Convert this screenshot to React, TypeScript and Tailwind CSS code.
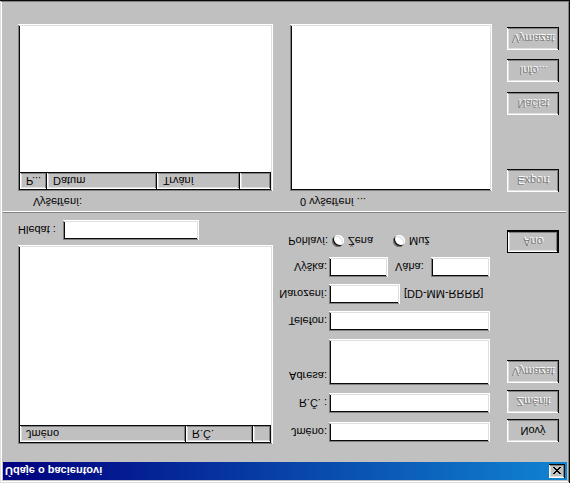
import React from "react";

const raised =
  "shadow-[inset_-1px_-1px_#0a0a0a,inset_1px_1px_#ffffff,inset_-2px_-2px_#808080,inset_2px_2px_#dfdfdf]";
const sunken =
  "shadow-[inset_-1px_-1px_#ffffff,inset_1px_1px_#808080,inset_-2px_-2px_#dfdfdf,inset_2px_2px_#0a0a0a]";

function Btn({ label, disabled, def, className = "" }: { label: string; disabled?: boolean; def?: boolean; className?: string }) {
  return (
    <div className={`w-[52px] h-[23px] shrink-0 bg-[#c0c0c0] ${def ? "border border-black" : ""} ${className}`}>
      <div
        className={`w-full h-full flex items-center justify-center ${raised} ${
          disabled ? "text-[#808080] [text-shadow:1px_1px_0_#ffffff]" : "text-black"
        }`}
      >
        {label}
      </div>
    </div>
  );
}

function Field({ className = "" }: { className?: string }) {
  return <div className={`bg-white shrink-0 ${sunken} ${className}`} />;
}

function HeadCell({ label, className = "" }: { label?: string; className?: string }) {
  return (
    <div className={`h-full shrink-0 flex items-center pl-[6px] bg-[#c0c0c0] ${raised} ${className}`}>{label}</div>
  );
}

function Radio({ label, className = "" }: { label: string; className?: string }) {
  return (
    <div className={`flex items-center ${className}`}>
      <div className="w-[12px] h-[12px] rounded-full bg-white shadow-[inset_1px_1px_#808080,inset_-1px_-1px_#ffffff,inset_2px_2px_#0a0a0a,inset_-2px_-2px_#dfdfdf]" />
      <span className="ml-[4px]">{label}</span>
    </div>
  );
}

function Row({ label, top, children, alignTop }: { label: string; top: string; children: React.ReactNode; alignTop?: boolean }) {
  return (
    <div className={`flex ${alignTop ? "items-start" : "items-center"} ${top}`}>
      <div className={`w-[49px] text-right whitespace-nowrap ${alignTop ? "pt-[3px]" : ""}`}>{label}</div>
      <div className="ml-[2px] flex items-center">{children}</div>
    </div>
  );
}

export default function App() {
  return (
    <div className="w-[570px] h-[483px] [transform:scaleY(-1)] font-['Liberation_Sans',Arial,sans-serif] text-[11px] leading-[13px] text-black">
      <div className="w-full h-full bg-[#c0c0c0] p-[3px] flex flex-col shadow-[inset_-1px_-1px_#0a0a0a,inset_1px_1px_#dfdfdf,inset_-2px_-2px_#808080,inset_2px_2px_#ffffff]">
        {/* title bar */}
        <div className="h-[18px] shrink-0 flex items-center justify-between pl-[2px] pr-[2px] bg-[linear-gradient(90deg,#000080,#1084d0)]">
          <span className="text-white font-bold">Údaje o pacientovi</span>
          <div className={`w-[16px] h-[14px] bg-[#c0c0c0] flex items-center justify-center ${raised}`}>
            <svg width="8" height="7" viewBox="0 0 8 7" shapeRendering="crispEdges">
              <path
                d="M0 0h2v1h-2zM6 0h2v1h-2zM1 1h2v1h-2zM5 1h2v1h-2zM2 2h4v1h-4zM3 3h2v1h-2zM2 4h4v1h-4zM1 5h2v1h-2zM5 5h2v1h-2zM0 6h2v1h-2zM6 6h2v1h-2z"
                fill="#000"
              />
            </svg>
          </div>
        </div>

        {/* patient section */}
        <div className="h-[249px] shrink-0 flex pl-[15px]">
          <div className="w-[255px] pt-[18px] flex flex-col">
            <div className={`h-[199px] bg-white p-[2px] ${sunken}`}>
              <div className="h-[17px] flex">
                <HeadCell label="Jméno" className="w-[166px]" />
                <HeadCell label="R.Č." className="w-[67px]" />
                <HeadCell className="w-[18px]" />
              </div>
            </div>
            <div className="mt-[5px] h-[20px] flex items-center">
              <span className="w-[45px]">Hledat :</span>
              <Field className="w-[136px] h-[20px]" />
            </div>
          </div>

          <div className="ml-[5px] w-[212px] pt-[20px] flex flex-col">
            <Row label="Jméno:" top="">
              <Field className="w-[161px] h-[20px]" />
            </Row>
            <Row label="R.Č. :" top="mt-[9px]">
              <Field className="w-[161px] h-[20px]" />
            </Row>
            <Row label="Adresa:" top="mt-[8px]" alignTop>
              <Field className="w-[161px] h-[46px]" />
            </Row>
            <Row label="Telefon:" top="mt-[8px]">
              <Field className="w-[161px] h-[20px]" />
            </Row>
            <Row label="Narození:" top="mt-[7px]">
              <Field className="w-[71px] h-[20px]" />
              <span className="ml-[4px] whitespace-nowrap">[DD-MM-RRRR]</span>
            </Row>
            <Row label="Výška:" top="mt-[7px]">
              <Field className="w-[59px] h-[20px]" />
              <span className="ml-[7px] w-[36px]">Váha:</span>
              <Field className="w-[59px] h-[20px]" />
            </Row>
            <div className="mt-[8px] h-[16px] flex items-center">
              <div className="w-[50px] text-right">Pohlaví:</div>
              <Radio label="Žena" className="ml-[4px]" />
              <Radio label="Muž" className="ml-[20px]" />
            </div>
          </div>

          <div className="ml-[17px] pt-[20px] flex flex-col">
            <Btn label="Nový" />
            <Btn label="Změnit" disabled className="mt-[6px]" />
            <Btn label="Vymazat" disabled className="mt-[7px]" />
            <Btn label="Ano" disabled def className="mt-[107px]" />
          </div>
        </div>

        {/* separator */}
        <div className="h-[2px] shrink-0 mr-[1px] border-t border-[#808080] border-b border-b-white" />

        {/* exam section */}
        <div className="flex-1 flex pl-[15px]">
          <div className="w-[255px] pt-[3px] flex flex-col">
            <div className="h-[13px] pl-[15px]">Vyšetření:</div>
            <div className={`mt-[4px] h-[167px] bg-white p-[2px] ${sunken}`}>
              <div className="h-[17px] flex">
                <HeadCell label="P..." className="w-[27px]" />
                <HeadCell label="Datum" className="w-[110px]" />
                <HeadCell label="Trvání" className="w-[83px]" />
                <HeadCell className="w-[31px]" />
              </div>
            </div>
          </div>

          <div className="ml-[17px] w-[202px] pt-[3px] flex flex-col">
            <div className="h-[13px] pl-[10px]">0 vyšetření ...</div>
            <div className={`mt-[4px] h-[167px] bg-white ${sunken}`} />
          </div>

          <div className="ml-[15px] pt-[19px] flex flex-col">
            <Btn label="Export" disabled />
            <Btn label="Načíst" disabled className="mt-[54px]" />
            <Btn label="Info..." disabled className="mt-[10px]" />
            <Btn label="Vymazat" disabled className="mt-[9px]" />
          </div>
        </div>
      </div>
    </div>
  );
}
